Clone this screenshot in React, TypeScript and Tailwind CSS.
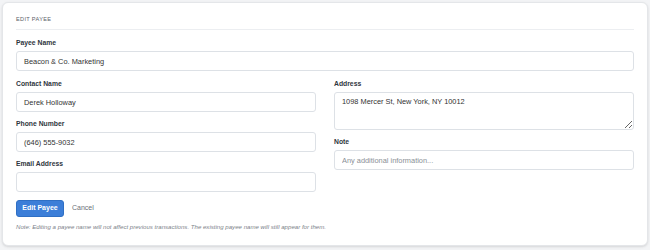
import React from "react"

const font = { fontFamily: '"Liberation Sans", Arial, sans-serif' }

function Label({ children }: { children: React.ReactNode }) {
  return <div className="h-[10px] text-[6.8px] font-bold leading-[10px] text-[#2f3640] mb-[3px]">{children}</div>
}

function TextInput({ value, placeholder }: { value?: string; placeholder?: string }) {
  return (
    <input
      readOnly
      defaultValue={value}
      placeholder={placeholder}
      className="block h-[20px] w-full rounded-[3px] border border-[#dde1e6] bg-white px-[7px] text-[7.4px] text-[#333] outline-none placeholder:text-[#8a8f96]"
    />
  )
}

export default function App() {
  return (
    <div className="h-[250px] w-[650px] bg-[#f3f4f6] p-[2px]" style={font}>
      <div className="flex h-[244px] flex-col rounded-[6px] border border-[#e4e6e9] bg-white px-[13px] pt-[12px] shadow-sm">
        <div className="border-b border-[#eceef1] pb-[6px] text-[5.6px] uppercase leading-[8px] tracking-[0.06em] text-[#5b616a]">
          Edit Payee
        </div>

        <div className="mt-[8px]">
          <Label>Payee Name</Label>
          <TextInput value="Beacon & Co. Marketing" />
        </div>

        <div className="mt-[8px] grid grid-cols-2 gap-x-[18px]">
          <div className="flex flex-col gap-[7px]">
            <div>
              <Label>Contact Name</Label>
              <TextInput value="Derek Holloway" />
            </div>
            <div>
              <Label>Phone Number</Label>
              <TextInput value="(646) 555-9032" />
            </div>
            <div>
              <Label>Email Address</Label>
              <TextInput />
            </div>
          </div>
          <div className="flex flex-col gap-[7px]">
            <div>
              <Label>Address</Label>
              <textarea
                readOnly
                defaultValue="1098 Mercer St, New York, NY 10012"
                className="mt-[1px] block h-[38px] w-full rounded-[3px] border border-[#dde1e6] bg-white px-[7px] pt-[4px] text-[7.4px] leading-[9px] text-[#333] outline-none"
              />
            </div>
            <div>
              <Label>Note</Label>
              <TextInput placeholder="Any additional information..." />
            </div>
          </div>
        </div>

        <div className="mt-[8px] flex items-center gap-[8px]">
          <button className="h-[17px] w-[48px] rounded-[3px] border border-[#2f6fc4] bg-[#3c7ed8] text-[7px] font-bold text-white">
            Edit Payee
          </button>
          <button className="text-[7px] text-[#6b7079]">Cancel</button>
        </div>

        <div className="mt-[5px] text-[6.1px] italic leading-[10px] text-[#7d828a]">
          Note: Editing a payee name will not affect previous transactions. The existing payee name will still appear for them.
        </div>
      </div>
    </div>
  )
}
